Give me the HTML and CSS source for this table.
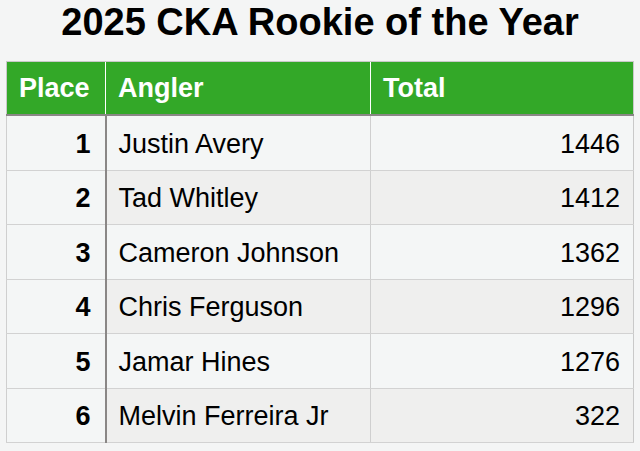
FILE: index.html
```html
<!DOCTYPE html>
<html lang="en">
<head>
<meta charset="utf-8">
<title>2025 CKA Rookie of the Year</title>
<link rel="stylesheet" href="styles.css">
</head>
<body>
<main class="page">
  <h1 class="title">2025 CKA Rookie of the Year</h1>
  <table class="standings">
    <colgroup>
      <col class="col-place">
      <col class="col-angler">
      <col class="col-total">
    </colgroup>
    <thead>
      <tr>
        <th>Place</th>
        <th>Angler</th>
        <th>Total</th>
      </tr>
    </thead>
    <tbody>
      <tr><td class="place">1</td><td class="angler">Justin Avery</td><td class="total">1446</td></tr>
      <tr><td class="place">2</td><td class="angler">Tad Whitley</td><td class="total">1412</td></tr>
      <tr><td class="place">3</td><td class="angler">Cameron Johnson</td><td class="total">1362</td></tr>
      <tr><td class="place">4</td><td class="angler">Chris Ferguson</td><td class="total">1296</td></tr>
      <tr><td class="place">5</td><td class="angler">Jamar Hines</td><td class="total">1276</td></tr>
      <tr><td class="place">6</td><td class="angler">Melvin Ferreira Jr</td><td class="total">322</td></tr>
    </tbody>
  </table>
</main>
</body>
</html>
```

FILE: styles.css
```css
html, body {
  margin: 0;
  padding: 0;
  background: #f4f5f5;
}

body {
  font-family: "Liberation Sans", Arial, Helvetica, sans-serif;
  color: #000;
}

.page {
  padding: 1px 7px 0 6px;
}

.title {
  margin: 0;
  font-size: 38px;
  font-weight: bold;
  line-height: 42px;
  text-align: center;
  padding-left: 1px;
}

.standings {
  margin-top: 18px;
  width: 627px;
  table-layout: fixed;
  border-collapse: collapse;
  border: 1px solid #c9c9c9;
  font-size: 27px;
}

.col-place { width: 99px; }
.col-angler { width: 265px; }
.col-total { width: 263px; }

.standings th {
  background: #33a828;
  color: #fff;
  font-weight: bold;
  text-align: left;
  height: 52px;
  padding: 0 12px;
  border-left: 1px solid #fff;
  border-bottom: 2px solid #8a8786;
  border-top: 1px solid #c9c9c9;
}

.standings th:first-child {
  border-left: 1px solid #c9c9c9;
}

.standings th:last-child {
  border-right: 1px solid #c9c9c9;
}

.standings td {
  height: 54px;
  padding: 3px 12px 0;
  border-bottom: 1px solid #d2d2d2;
  border-left: 1px solid #cfcfcf;
  vertical-align: middle;
  box-sizing: border-box;
  white-space: nowrap;
}

.standings tbody tr:nth-child(odd) td {
  height: 55px;
}

.standings td.place {
  font-weight: bold;
  text-align: right;
  padding-right: 14px;
  border-right: 2px solid #8a8786;
  background: #f4f6f6;
}

.standings td.angler {
  border-left: 2px solid #8a8786;
}

.standings td.total {
  text-align: right;
  padding-right: 13px;
}

.standings tbody tr:nth-child(odd) td.angler,
.standings tbody tr:nth-child(odd) td.total {
  background: #f4f6f6;
}

.standings tbody tr:nth-child(even) td.angler,
.standings tbody tr:nth-child(even) td.total {
  background: #efefee;
}
```
